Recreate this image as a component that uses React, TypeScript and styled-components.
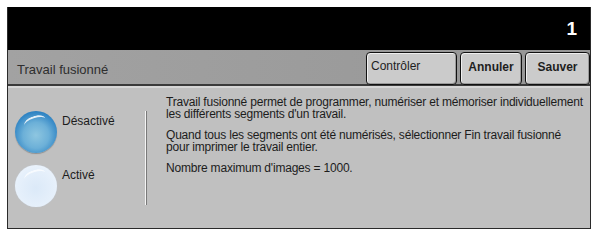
import React from "react";
import styled, { createGlobalStyle } from "styled-components";

const GlobalStyle = createGlobalStyle`
  body {
    margin: 0;
    background: #ffffff;
    font-family: "Liberation Sans", Arial, sans-serif;
  }
`;

const Screen = styled.div`
  width: 584px;
  height: 222px;
  margin: 7px 0 0 7px;
  box-sizing: border-box;
  border-left: 1px solid #2a2a2a;
  border-right: 1px solid #2a2a2a;
  border-bottom: 1px solid #2a2a2a;
  display: flex;
  flex-direction: column;
`;

const TopBar = styled.div`
  height: 43px;
  flex: none;
  background: #000;
  color: #fff;
  display: flex;
  align-items: center;
  justify-content: flex-end;
  padding-right: 13px;
  font-weight: bold;
  font-size: 19px;
`;

const TitleBar = styled.div`
  height: 36px;
  flex: none;
  display: flex;
  background: linear-gradient(to right, #a2a2a2, #969696);
  border-bottom: 2px solid #3a3a3a;
  box-sizing: border-box;
`;

const Title = styled.div`
  flex: 1;
  display: flex;
  align-items: center;
  padding: 4px 0 0 9px;
  font-size: 13px;
  color: #2e2e2e;
`;

const ButtonGroup = styled.div`
  display: flex;
  gap: 3px;
  padding-top: 2px;
  margin-bottom: -1px;
`;

const Button = styled.div<{ $w: number; $bold?: boolean }>`
  width: ${(p) => p.$w}px;
  box-sizing: border-box;
  border: 1px solid #111;
  border-radius: 4px;
  background: #cbcbcb;
  box-shadow: inset 1px 1px 0 #efefef, inset -1px -1px 0 #9a9a9a;
  display: flex;
  font-size: 12px;
  color: #1e1e1e;
  ${(p) =>
    p.$bold
      ? `font-weight: bold; align-items: center; justify-content: center; padding-bottom: 4px;`
      : `align-items: flex-start; padding: 6px 0 0 4px;`}
`;

const Content = styled.div`
  flex: 1;
  display: flex;
  background: #c0c0c0;
  border-top: 2px solid #d6d6d6;
`;

const Options = styled.div`
  width: 137px;
  flex: none;
  display: flex;
  flex-direction: column;
  gap: 12px;
  padding: 23px 0 0 7px;
  box-sizing: border-box;
`;

const Option = styled.div`
  display: flex;
  align-items: flex-start;
  gap: 5px;
`;

const Ball = styled.div<{ $on: boolean }>`
  width: 42px;
  height: 42px;
  border-radius: 50%;
  flex: none;
  position: relative;
  background: ${(p) =>
    p.$on
      ? "radial-gradient(circle at 50% 58%, #8ec6e0 0%, #6cb0d8 40%, #2a80c2 75%, #125aa2 100%)"
      : "radial-gradient(circle at 50% 55%, #dbe9f8 0%, #e6f0fb 60%, #f2f7fd 100%)"};
  box-shadow: ${(p) =>
    p.$on ? "0 1px 1px rgba(0,0,0,0.25)" : "0 0 1px rgba(200,215,235,0.9)"};
  &::after {
    content: "";
    position: absolute;
    left: 9px;
    top: 5px;
    width: 22px;
    height: 10px;
    border-radius: 50%;
    border-top: 2px solid ${(p) => (p.$on ? "rgba(255,255,255,0.85)" : "rgba(255,255,255,0.7)")};
    transform: rotate(-18deg);
  }
`;

const OptionLabel = styled.div`
  font-size: 12px;
  color: #1c1c1c;
  padding-top: 3px;
`;

const Separator = styled.div`
  width: 1px;
  height: 94px;
  margin-top: 23px;
  flex: none;
  background: #f4f4f4;
  border-right: 1px solid #7a7a7a;
`;

const Description = styled.div`
  padding: 8px 0 0 19px;
  color: #1c1c1c;
  font-size: 12px;
  letter-spacing: -0.2px;
  line-height: 12px;
`;

const Paragraph = styled.p`
  margin: 0 0 9px;
`;

export default function App() {
  return (
    <>
      <GlobalStyle />
      <Screen>
        <TopBar>1</TopBar>
        <TitleBar>
          <Title>Travail fusionné</Title>
          <ButtonGroup>
            <Button $w={91}>Contrôler</Button>
            <Button $w={62} $bold>Annuler</Button>
            <Button $w={65} $bold>Sauver</Button>
          </ButtonGroup>
        </TitleBar>
        <Content>
          <Options>
            <Option>
              <Ball $on />
              <OptionLabel>Désactivé</OptionLabel>
            </Option>
            <Option>
              <Ball $on={false} />
              <OptionLabel>Activé</OptionLabel>
            </Option>
          </Options>
          <Separator />
          <Description>
            <Paragraph>
              Travail fusionné permet de programmer, numériser et mémoriser individuellement
              <br />
              les différents segments d'un travail.
            </Paragraph>
            <Paragraph>
              Quand tous les segments ont été numérisés, sélectionner Fin travail fusionné
              <br />
              pour imprimer le travail entier.
            </Paragraph>
            <Paragraph>Nombre maximum d'images = 1000.</Paragraph>
          </Description>
        </Content>
      </Screen>
    </>
  );
}
